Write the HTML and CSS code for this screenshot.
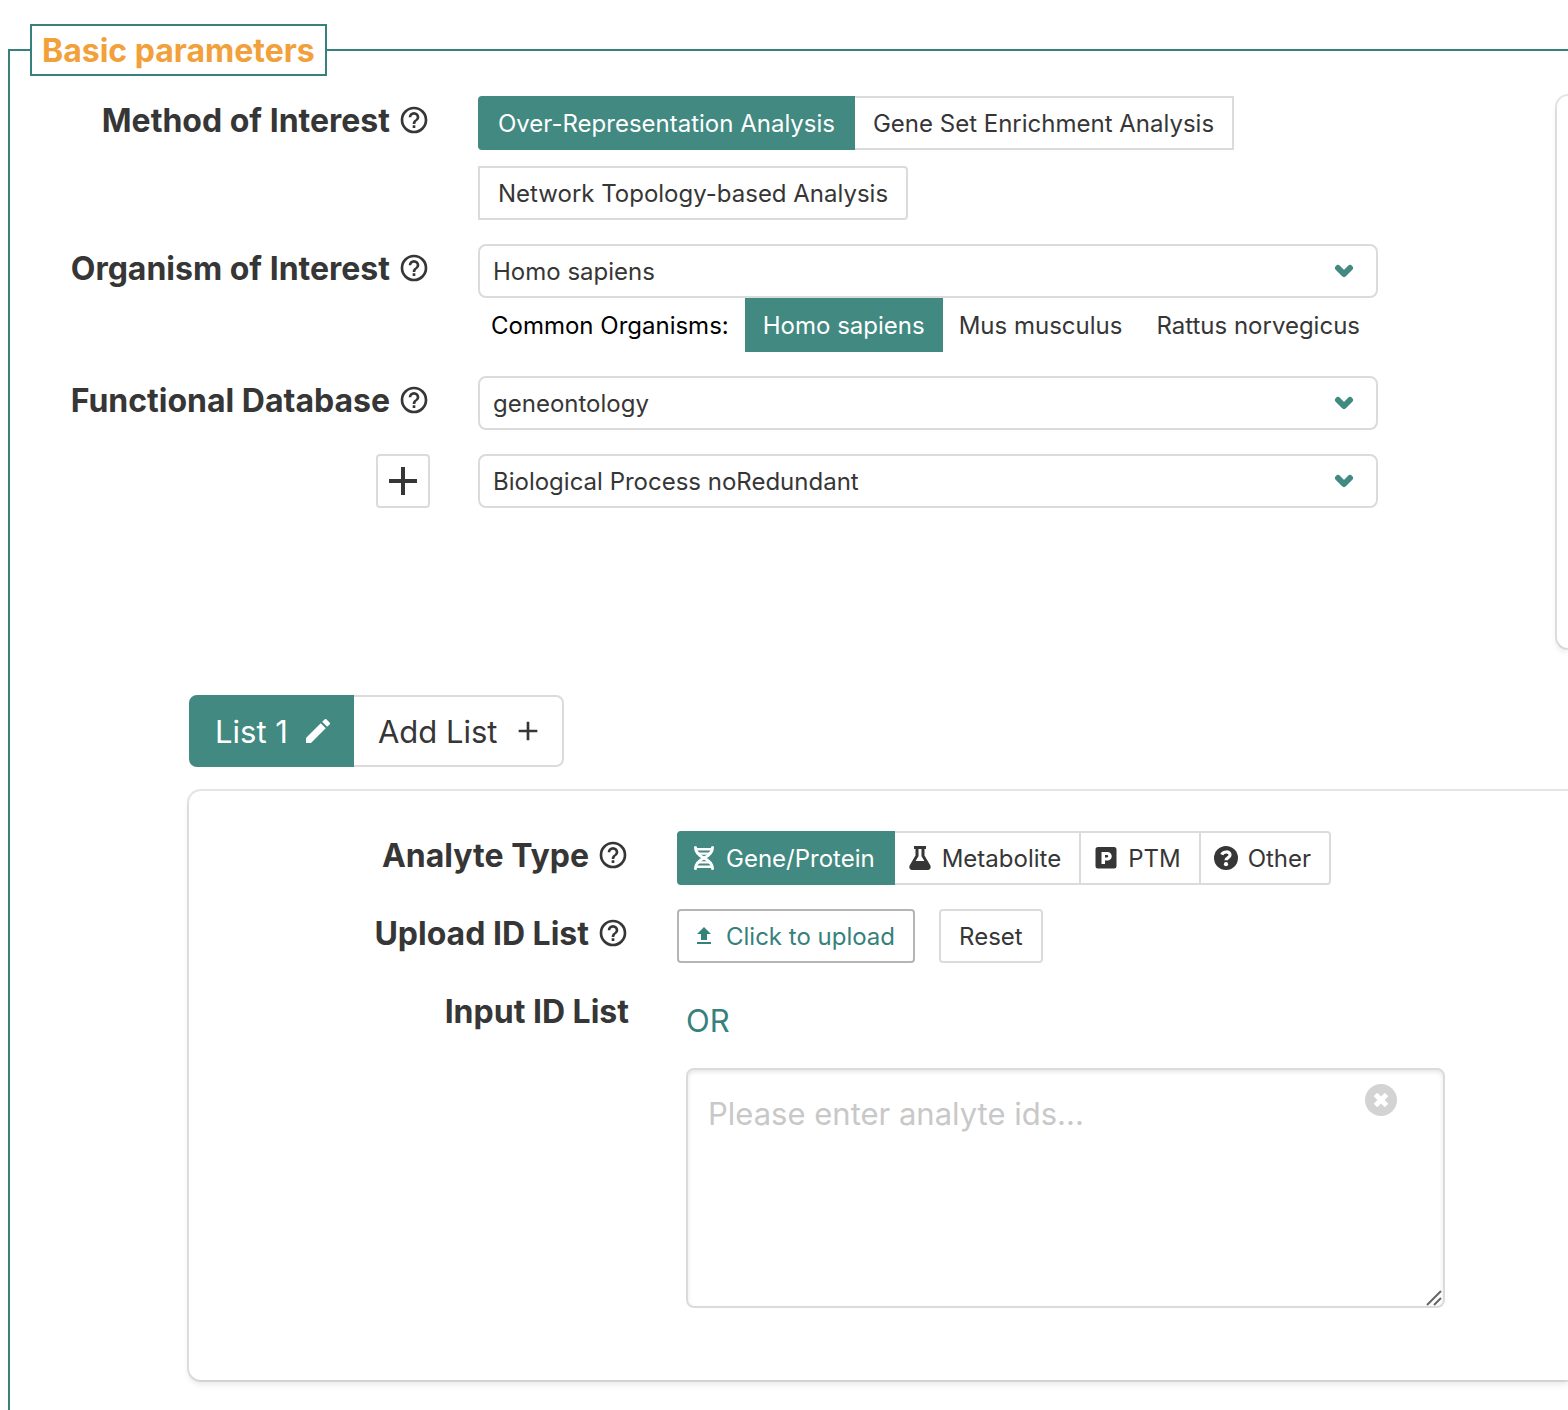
FILE: index.html
```html
<!DOCTYPE html>
<html lang="en">
<head>
<meta charset="utf-8">
<meta name="viewport" content="width=device-width, initial-scale=1">
<title>Basic parameters</title>
<link rel="stylesheet" href="styles.css">
</head>
<body>
<svg class="sprite" aria-hidden="true">
  <symbol id="help" viewBox="0 0 24 24"><path d="M11 18h2v-2h-2v2m1-16A10 10 0 0 0 2 12a10 10 0 0 0 10 10 10 10 0 0 0 10-10A10 10 0 0 0 12 2m0 18c-4.410 0-8-3.590-8-8s3.590-8 8-8 8 3.590 8 8-3.590 8-8 8m0-14a4 4 0 0 0-4 4h2a2 2 0 0 1 2-2 2 2 0 0 1 2 2c0 2-3 1.750-3 5h2c0-2.250 3-2.500 3-5a4 4 0 0 0-4-4z"/></symbol>
  <symbol id="plus" viewBox="0 0 24 24"><path d="M19 13h-6v6h-2v-6H5v-2h6V5h2v6h6v2z"/></symbol>
  <symbol id="pencil" viewBox="0 0 24 24"><path d="M20.710 7.040c.390-.390.390-1.040 0-1.410l-2.340-2.340c-.370-.390-1.020-.390-1.410 0l-1.840 1.830 3.750 3.750M3 17.250V21h3.750L17.810 9.930l-3.750-3.750L3 17.250z"/></symbol>
  <symbol id="chevron" viewBox="0 0 20 14"><path d="M4 4l6 6 6-6" fill="none" stroke="currentColor" stroke-width="6" stroke-linecap="round" stroke-linejoin="round"/></symbol>
  <symbol id="dna" viewBox="0 0 24 24"><path d="M3.500 1.500C3.500 7.500 8 10 12 12s8.500 4.500 8.500 10.500M20.500 1.500C20.500 7.500 16 10 12 12s-8.500 4.500-8.500 10.500" fill="none" stroke="currentColor" stroke-width="3" stroke-linecap="round"/><path d="M4 2h16v2.500H4zM6 6.500h12v2.200H6zM6 15.300h12v2.200H6zM4 19.500h16V22H4z"/></symbol>
  <symbol id="flask" viewBox="0 0 24 24"><path fill-rule="evenodd" d="M6 0h12v3h-1.500v6.500l5.600 9.500c1.400 2.400.2 5-2.600 5h-15c-2.800 0-4-2.600-2.600-5L7.500 9.500V3H6zM10.500 3v7.300L7.600 15h8.800l-2.900-4.700V3z"/></symbol>
  <symbol id="ptm" viewBox="0 0 24 24"><path fill-rule="evenodd" d="M4 1h16a2.500 2.500 0 0 1 2.500 2.500v16.500a2.500 2.500 0 0 1-2.500 2.500H4A2.500 2.500 0 0 1 1.500 20V3.500A2.500 2.500 0 0 1 4 1zM7.500 6v12H11v-3.500h2.500a4.250 4.250 0 0 0 0-8.500zM11 9h2a1.250 1.250 0 0 1 0 2.500h-2z"/></symbol>
  <symbol id="other" viewBox="0 0 24 24"><circle cx="12" cy="12" r="12"/><path d="M7.800 8.600C9 5.500 16 4.600 16 8.900c0 3-4 2.800-4 5.400" fill="none" stroke="#fff" stroke-width="3.200"/><circle cx="12" cy="18.200" r="2.100" fill="#fff"/></symbol>
  <symbol id="upload" viewBox="0 0 24 24"><path d="M9 16v-6H5l7-7 7 7h-4v6H9m-4 4v-2h14v2H5z"/></symbol>
</svg>

<fieldset class="params">
  <legend class="params-title">Basic parameters</legend>

  <div class="top">
    <div class="rows">
      <div class="row">
        <div class="label">Method of Interest <svg class="icon-md"><use href="#help"/></svg></div>
        <div class="method">
          <button type="button" class="btn first selected">Over-Representation Analysis</button>
          <button type="button" class="btn joined">Gene Set Enrichment Analysis</button>
          <button type="button" class="btn last">Network Topology-based Analysis</button>
        </div>
      </div>

      <div class="row">
        <label class="label" for="organism">Organism of Interest <svg class="icon-md"><use href="#help"/></svg></label>
        <div>
          <div class="select">
            <select id="organism"><option>Homo sapiens</option><option>Mus musculus</option><option>Rattus norvegicus</option></select>
            <svg class="chevron"><use href="#chevron"/></svg>
          </div>
          <div class="common">
            <span class="common-title">Common Organisms:</span>
            <button type="button" class="btn plain selected">Homo sapiens</button>
            <button type="button" class="btn plain joined">Mus musculus</button>
            <button type="button" class="btn plain joined">Rattus norvegicus</button>
          </div>
        </div>
      </div>

      <div class="row">
        <label class="label" for="database">Functional Database <svg class="icon-md"><use href="#help"/></svg></label>
        <div class="select">
          <select id="database"><option>geneontology</option></select>
          <svg class="chevron"><use href="#chevron"/></svg>
        </div>
      </div>

      <div class="row">
        <div class="add">
          <button type="button" class="btn add-btn" aria-label="Add database"><svg class="icon-lg"><use href="#plus"/></svg></button>
        </div>
        <div class="select">
          <select aria-label="Database category"><option>Biological Process noRedundant</option></select>
          <svg class="chevron"><use href="#chevron"/></svg>
        </div>
      </div>
    </div>
    <aside class="side"></aside>
  </div>

  <div class="lists">
    <div class="tabs">
      <button type="button" class="tab selected">List 1 <svg class="icon-md"><use href="#pencil"/></svg></button>
      <button type="button" class="tab joined">Add List <svg class="icon-md"><use href="#plus"/></svg></button>
    </div>

    <div class="card">
      <div class="row">
        <div class="label">Analyte Type <svg class="icon-md"><use href="#help"/></svg></div>
        <div class="group">
          <button type="button" class="btn with-icon first selected"><svg class="icon-sm"><use href="#dna"/></svg>Gene/Protein</button>
          <button type="button" class="btn with-icon joined"><svg class="icon-sm"><use href="#flask"/></svg>Metabolite</button>
          <button type="button" class="btn with-icon joined"><svg class="icon-sm"><use href="#ptm"/></svg>PTM</button>
          <button type="button" class="btn with-icon joined last"><svg class="icon-sm"><use href="#other"/></svg>Other</button>
        </div>
      </div>

      <div class="row">
        <div class="label">Upload ID List <svg class="icon-md"><use href="#help"/></svg></div>
        <div class="upload">
          <button type="button" class="btn with-icon upload-btn"><svg class="icon-sm"><use href="#upload"/></svg>Click to upload</button>
          <button type="button" class="btn first last">Reset</button>
        </div>
      </div>

      <div class="row">
        <label class="label" for="ids">Input ID List</label>
        <div class="input">
          <p class="or">OR</p>
          <div class="ids">
            <textarea id="ids" placeholder="Please enter analyte ids..."></textarea>
            <button type="button" class="clear" aria-label="Clear"><svg viewBox="0 0 32 32"><path d="M10.500 10.500l11 11M21.500 10.500l-11 11" stroke="#fff" stroke-width="5"/></svg></button>
            <svg class="grip" viewBox="0 0 16 16"><path d="M1 15L15 1M8 15l7-7" stroke="#666" stroke-width="2"/></svg>
          </div>
        </div>
      </div>
    </div>
  </div>
</fieldset>
</body>
</html>
```
FILE: styles.css
```css
* {
  box-sizing: border-box;
}

body {
  display: flex;
  flex-direction: column;
  min-height: 100vh;
  margin: 0;
  background: #fff;
  color: #363636;
  font-family: Inter, "Liberation Sans", sans-serif;
  font-size: 24px;
}

button,
select,
textarea {
  margin: 0;
  color: inherit;
  font: inherit;
}

svg {
  fill: currentColor;
  flex: none;
}

.sprite {
  position: absolute;
  width: 0;
  height: 0;
}

.icon-sm { width: 24px; height: 24px; }
.icon-md { width: 32px; height: 32px; }
.icon-lg { width: 48px; height: 48px; }

.params {
  flex: 1;
  min-width: 0;
  margin: 24px 0 0 8px;
  padding: 20px 0 24px 20px;
  border: 2px solid #36817c;
  border-width: 2px 0 0 2px;
}

.params-title {
  padding: 2px 10px 0;
  border: 2px solid #36817c;
  color: #f2a03a;
  font-size: 32px;
  font-weight: 700;
  line-height: 46px;
}

.top {
  display: grid;
  grid-template-columns: minmax(0, 1fr) 11px;
  column-gap: 179px;
  min-height: 552px;
}

.rows,
.card {
  display: flex;
  flex-direction: column;
  gap: 24px;
}

.row {
  display: grid;
  grid-template-columns: 400px minmax(0, 1fr);
  column-gap: 48px;
}

.label {
  display: flex;
  align-items: center;
  justify-content: flex-end;
  gap: 8px;
  height: 48px;
  font-size: 32px;
  font-weight: 700;
  white-space: nowrap;
}

.side {
  border-radius: 12px 0 0 12px;
  box-shadow: 0 4px 6px rgba(10, 10, 10, 0.1), 0 0 0 2px rgba(10, 10, 10, 0.1);
}

.btn {
  display: inline-flex;
  align-items: center;
  justify-content: center;
  height: 54px;
  padding: 0 18px;
  border: 2px solid #dbdbdb;
  background: #fff;
  white-space: nowrap;
}

.joined { margin-left: -2px; }
.first { border-top-left-radius: 4px; border-bottom-left-radius: 4px; }
.last { border-top-right-radius: 4px; border-bottom-right-radius: 4px; }

.plain {
  padding: 0 16px;
  border-color: transparent;
  background: transparent;
}

.selected,
.plain.selected {
  position: relative;
  border-color: #418981;
  background: #418981;
  color: #fff;
}

.method {
  display: flex;
  flex-wrap: wrap;
  row-gap: 16px;
}

.select {
  position: relative;
}

.select select {
  display: block;
  width: 100%;
  height: 54px;
  padding: 0 48px 0 13px;
  border: 2px solid #dbdbdb;
  border-radius: 8px;
  background: #fff;
  appearance: none;
}

.chevron {
  position: absolute;
  top: 20px;
  right: 24px;
  width: 20px;
  height: 14px;
  color: #418981;
  pointer-events: none;
}

.common {
  display: flex;
  align-items: center;
  justify-content: flex-end;
}

.common-title {
  margin-right: 16px;
  color: #000;
  white-space: nowrap;
}

.add {
  display: flex;
  justify-content: flex-end;
}

.add-btn {
  width: 54px;
  padding: 0;
  border-radius: 4px;
}

.lists {
  margin: 47px 0 0 159px;
}

.tabs {
  display: flex;
  margin-bottom: 24px;
}

.tab {
  display: flex;
  align-items: center;
  gap: 14px;
  height: 72px;
  padding: 0 18px 0 24px;
  border: 2px solid #dbdbdb;
  background: #fff;
  font-size: 31px;
}

.tab:first-child { border-radius: 8px 0 0 8px; }
.tab:last-child { border-radius: 0 8px 8px 0; }
.tab.selected { border-color: #418981; background: #418981; }

.card {
  padding: 40px 0 72px 40px;
  border-radius: 12px 0 0 12px;
  box-shadow: 0 4px 6px rgba(10, 10, 10, 0.1), 0 0 0 2px rgba(10, 10, 10, 0.1);
}

.group,
.upload {
  display: flex;
}

.upload { gap: 24px; }

.with-icon {
  gap: 10px;
  padding-left: 13px;
}

.upload-btn {
  border-color: #b5b5b5;
  border-radius: 4px;
  color: #36817c;
}

.input {
  padding: 10px 0 0 9px;
}

.or {
  margin: 0 0 23px;
  color: #36817c;
  font-size: 31px;
  line-height: 48px;
}

.ids {
  position: relative;
  width: 86%;
}

.ids textarea {
  display: block;
  width: 100%;
  height: 240px;
  padding: 20px;
  border: 2px solid #dbdbdb;
  border-radius: 8px;
  box-shadow: inset 0 2px 4px rgba(10, 10, 10, 0.1);
  font-size: 31px;
  line-height: 48px;
  resize: vertical;
}

.ids textarea::placeholder { color: #c8c8c8; }
.ids textarea::-webkit-resizer { background: transparent; }

.clear {
  position: absolute;
  top: 16px;
  right: 48px;
  width: 32px;
  height: 32px;
  padding: 0;
  border: 0;
  border-radius: 50%;
  background: #d3d3d3;
}

.clear svg {
  display: block;
  width: 32px;
  height: 32px;
}

.grip {
  position: absolute;
  right: 3px;
  bottom: 2px;
  width: 16px;
  height: 16px;
  pointer-events: none;
}
```
